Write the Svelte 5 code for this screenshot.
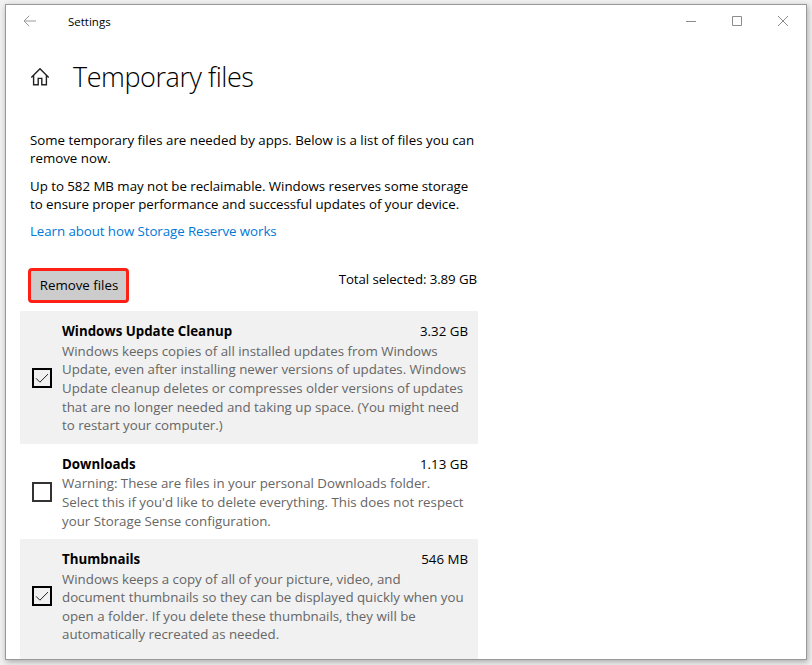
<script>
	const groups = [
		{
			name: 'Windows Update Cleanup',
			size: '3.32 GB',
			checked: true,
			lines: [
				'Windows keeps copies of all installed updates from Windows',
				'Update, even after installing newer versions of updates. Windows',
				'Update cleanup deletes or compresses older versions of updates',
				'that are no longer needed and taking up space. (You might need',
				'to restart your computer.)'
			]
		},
		{
			name: 'Downloads',
			size: '1.13 GB',
			checked: false,
			lines: [
				'Warning: These are files in your personal Downloads folder.',
				"Select this if you'd like to delete everything. This does not respect",
				'your Storage Sense configuration.'
			]
		},
		{
			name: 'Thumbnails',
			size: '546 MB',
			checked: true,
			lines: [
				'Windows keeps a copy of all of your picture, video, and',
				'document thumbnails so they can be displayed quickly when you',
				'open a folder. If you delete these thumbnails, they will be',
				'automatically recreated as needed.'
			]
		}
	];

	let items = $state(groups);
</script>

<div class="desktop">
	<div class="window">
		<header class="titlebar">
			<svg class="back" width="14" height="12" viewBox="0 0 14 12">
				<path d="M13 6H1M6.3 .7L1 6l5.3 5.3" />
			</svg>
			<span class="app-name">Settings</span>
			<div class="controls">
				<svg width="12" height="12" viewBox="0 0 12 12"><path d="M1 6.5h10" /></svg>
				<svg width="12" height="12" viewBox="0 0 12 12"><path d="M1.5 1.5h9v9h-9z" /></svg>
				<svg width="12" height="12" viewBox="0 0 12 12"><path d="M1 1l10 10M11 1L1 11" /></svg>
			</div>
		</header>

		<div class="heading">
			<svg class="home" width="20" height="20" viewBox="0 0 20 20">
				<path d="M1.3 10.4L10 1.7l8.7 8.7M3.6 8.5v9.2h4.6v-6.3h3.6v6.3h4.6V8.5" />
			</svg>
			<h1>Temporary files</h1>
		</div>

		<main>
			<div class="intro">
				<p>Some temporary files are needed by apps. Below is a list of files you can<br />remove now.</p>
				<p class="tight">Up to 582 MB may not be reclaimable. Windows reserves some storage<br />to ensure proper performance and successful updates of your device.</p>
				<a href="#storage-reserve">Learn about how Storage Reserve works</a>
			</div>

			<div class="actions">
				<button type="button">Remove files</button>
				<span class="total">Total selected: 3.89 GB</span>
			</div>

			<div class="list">
				{#each items as item}
					<label class="item">
						<input type="checkbox" bind:checked={item.checked} />
						<span class="box" class:checked={item.checked}>
							{#if item.checked}
								<svg width="16" height="16" viewBox="0 0 16 16"><path d="M2 8.3l3.9 3.9L14 4.1" /></svg>
							{/if}
						</span>
						<span class="info">
							<span class="row">
								<span class="name">{item.name}</span>
								<span class="size">{item.size}</span>
							</span>
							<span class="desc">
								{#each item.lines as line}
									<span class="line">{line}</span>
								{/each}
							</span>
						</span>
					</label>
				{/each}
			</div>
		</main>
	</div>
</div>

<style>
	:global(body) {
		margin: 0;
		background: #ededed;
	}

	.desktop {
		box-sizing: border-box;
		width: 812px;
		height: 665px;
		padding: 4px 5px;
		overflow: hidden;
		background: #f1f1f1;
		font-family: 'Open Sans', 'Noto Sans', sans-serif;
		font-size: 13.3px;
		color: #000;
	}

	.window {
		box-sizing: border-box;
		width: 802px;
		height: 656px;
		overflow: hidden;
		background: #fff;
		border: 1px solid #999;
		box-shadow: 1px 2px 6px rgba(0, 0, 0, 0.3);
	}

	svg {
		display: block;
		flex-shrink: 0;
		fill: none;
	}

	.titlebar {
		display: flex;
		align-items: center;
		height: 33px;
		padding: 0 17px;
	}

	.back {
		margin-bottom: 2px;
		stroke: #999;
	}

	.app-name {
		margin: -1px 0 0 31px;
		font-size: 11.5px;
	}

	.controls {
		display: flex;
		gap: 34px;
		margin-left: auto;
		margin-bottom: 1px;
		stroke: #8c8c8c;
	}

	.heading {
		display: flex;
		align-items: center;
		height: 40px;
		margin-top: 19px;
		padding-left: 24px;
	}

	.home {
		stroke: #222;
		stroke-width: 1.4;
	}

	h1 {
		margin: 0 0 0 23px;
		font-size: 27px;
		font-weight: 300;
		line-height: 40px;
		letter-spacing: -0.45px;
	}

	main {
		width: 458px;
		margin: 34px 0 0 14px;
	}

	.intro {
		padding-left: 10px;
		line-height: 18px;
		white-space: nowrap;
	}

	p {
		margin: 0 0 10px;
	}

	.tight {
		letter-spacing: -0.03px;
	}

	a {
		display: block;
		margin-top: -1px;
		color: #0078d7;
		letter-spacing: -0.07px;
		text-decoration: none;
	}

	.actions {
		display: flex;
		justify-content: space-between;
		align-items: flex-start;
		margin-top: 28px;
		padding: 0 1px 0 8px;
		height: 43.2px;
	}

	button {
		box-sizing: border-box;
		width: 101px;
		height: 35px;
		padding: 0 0 1px 1px;
		border: 3px solid #ff2015;
		border-radius: 4px;
		background: #ccc;
		color: #000;
		font: inherit;
		white-space: nowrap;
	}

	.total {
		margin-top: 2px;
		letter-spacing: -0.1px;
		line-height: 18px;
	}

	.item {
		display: flex;
		align-items: center;
		box-sizing: border-box;
		padding: 0 10px 0 12px;
	}

	.item:nth-child(odd) {
		background: #f1f1f1;
	}

	.item:last-child {
		padding-bottom: 7px;
	}

	input {
		display: none;
	}

	.box {
		box-sizing: border-box;
		width: 20px;
		height: 20px;
		flex-shrink: 0;
		margin-top: 0.8px;
		border: 2px solid #333;
	}

	.box.checked {
		border-color: #000;
		stroke: #222;
	}

	.info {
		flex: 1;
		min-width: 0;
		margin-left: 10px;
		padding: 10px 0 8.8px;
	}

	.row {
		display: flex;
		justify-content: space-between;
		line-height: 20px;
	}

	.name {
		font-weight: 700;
	}

	.desc {
		display: block;
		margin-top: 0.7px;
		color: #666;
		letter-spacing: -0.01px;
	}

	.line {
		display: block;
		line-height: 18.6px;
		white-space: nowrap;
	}
</style>
